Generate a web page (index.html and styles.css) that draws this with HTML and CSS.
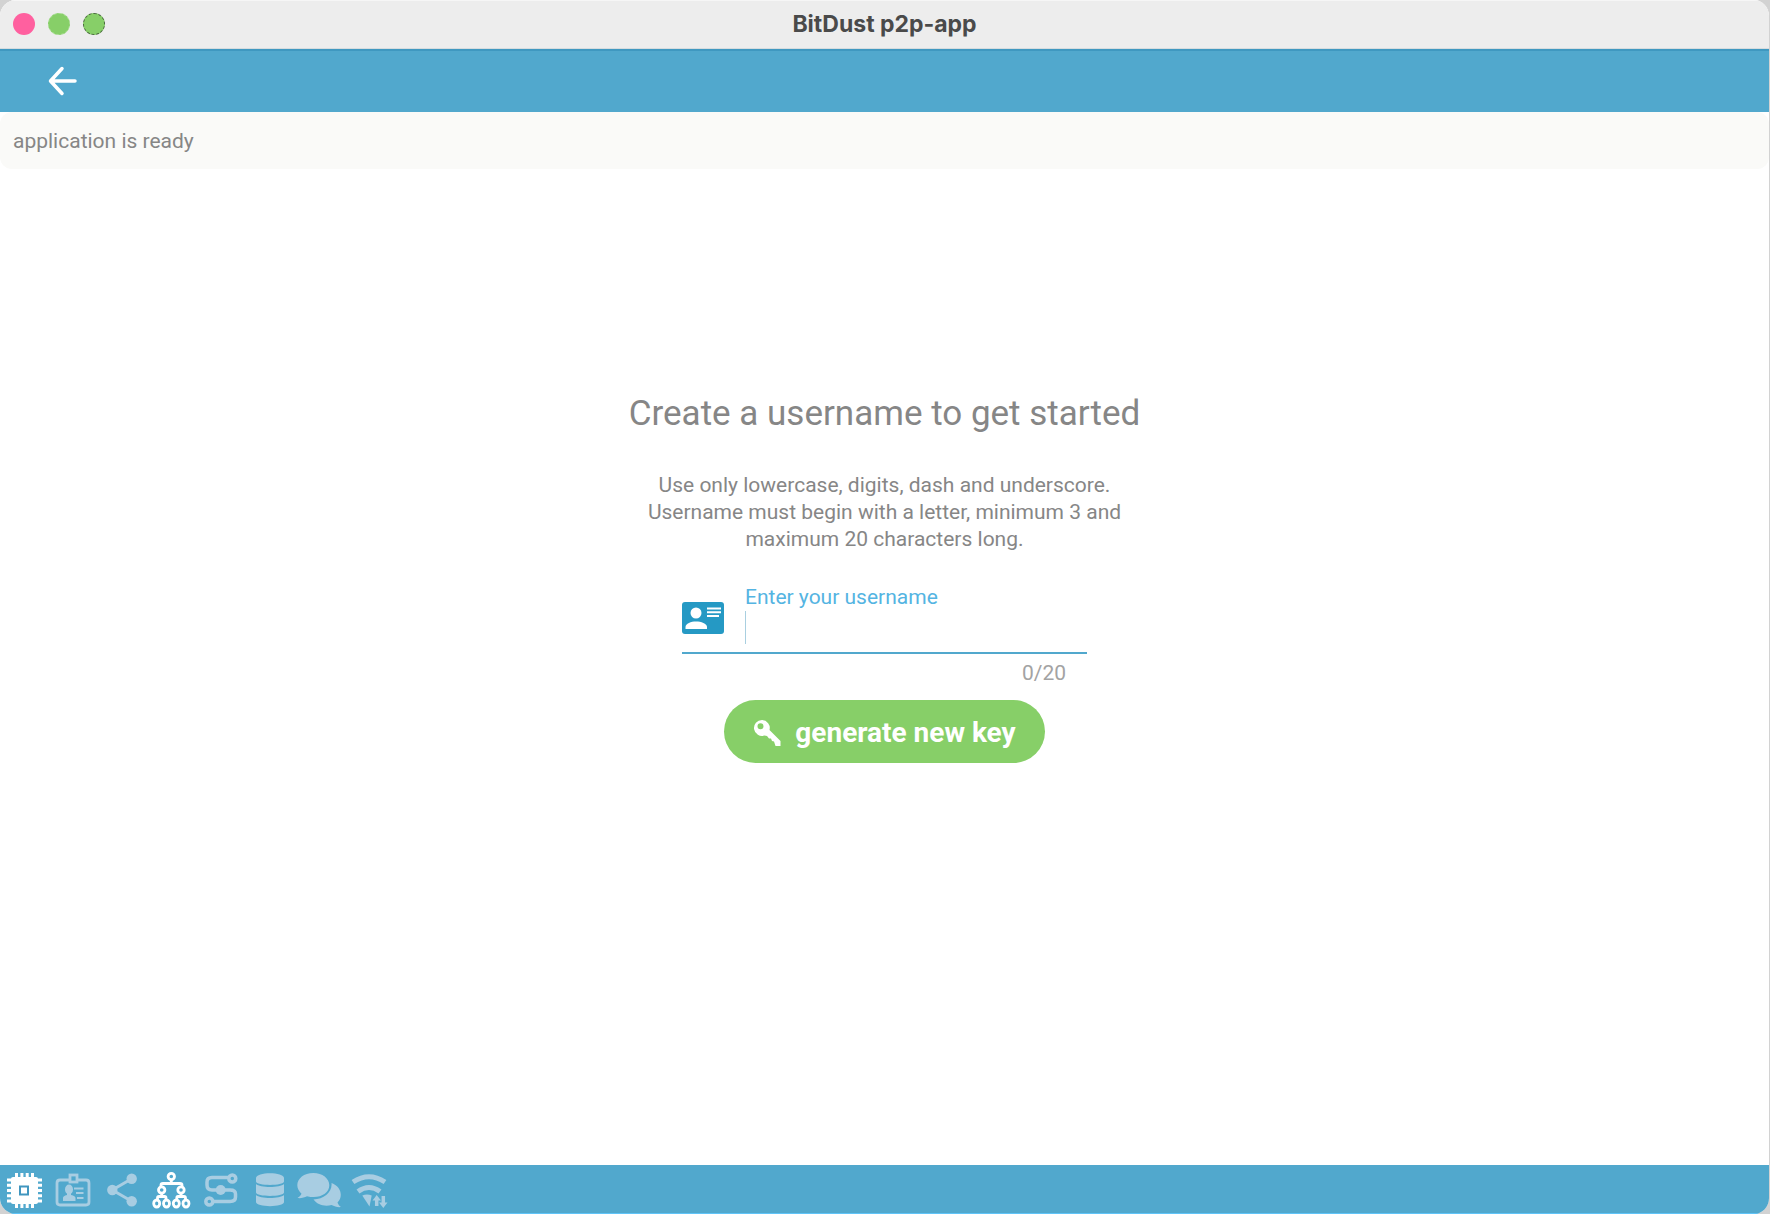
FILE: index.html
```html
<!DOCTYPE html>
<html lang="en">
<head>
<meta charset="utf-8">
<meta name="viewport" content="width=device-width, initial-scale=1">
<title>BitDust p2p-app</title>
<link rel="stylesheet" href="styles.css">
</head>
<body>
<div class="window">
  <header class="titlebar">
    <div class="lights">
      <button class="light light-close" type="button" aria-label="Close"></button>
      <button class="light light-min" type="button" aria-label="Minimize"></button>
      <button class="light light-max" type="button" aria-label="Maximize"></button>
    </div>
    <h1 class="title">BitDust p2p-app</h1>
  </header>

  <nav class="toolbar">
    <button class="back" type="button" aria-label="Back">
      <svg width="32" height="32" viewBox="0 0 32 32" fill="none" stroke="#fff" stroke-width="3.500" stroke-linecap="round" stroke-linejoin="round"><path d="M28 16H4M15 3.500L3.500 16L15 28.500"/></svg>
    </button>
  </nav>

  <p class="status">application is ready</p>

  <main class="content">
    <h2 class="heading">Create a username to get started</h2>
    <p class="hint">Use only lowercase, digits, dash and underscore. Username must begin with a letter, minimum 3 and maximum 20 characters long.</p>
    <form class="form">
      <div class="field">
        <svg class="field-icon" width="42" height="32" viewBox="0 0 42 32">
          <rect width="42" height="32" rx="3" fill="#2599c4"/>
          <circle cx="14" cy="11" r="5.500" fill="#fff"/>
          <path d="M3.500 27V25C3.500 21.500 9 19.500 14 19.500S25 21.500 25 25V27Z" fill="#fff"/>
          <path d="M25 6.500H39M25 10.200H39M25 14H37" stroke="#fff" stroke-width="2"/>
        </svg>
        <div class="field-text">
          <label class="label" for="username">Enter your username</label>
          <input class="input" id="username" type="text" maxlength="20" autocomplete="off">
        </div>
      </div>
      <p class="counter">0/20</p>
      <button class="generate" type="button">
        <svg width="28" height="28" viewBox="0 0 28 28"><path fill="#fff" fill-rule="evenodd" d="M9 1A8 8 0 1 0 11.500 16.600L14 17L16 19.500L18 19.500L19 22L21 22.500L22.500 27H27.500V22L16.500 11A8 8 0 0 0 9 1ZM7.500 4.300A3 3 0 1 1 7.500 10.300A3 3 0 1 1 7.500 4.300Z"/></svg>
        generate new key
      </button>
    </form>
  </main>

  <footer class="dock">
    <svg class="dock-icon active" viewBox="0 0 48 48">
      <rect x="11" y="12" width="27" height="27" rx="2" fill="currentColor"/>
      <path d="M16.500 8V43M21.900 8V43M27.200 8V43M32.500 8V43M7 15H42M7 20.200H42M7 25.500H42M7 30.700H42M7 36H42" stroke="currentColor" stroke-width="3"/>
      <rect x="20" y="21.500" width="8" height="8" fill="#fff" stroke="#4196bf" stroke-width="2"/>
    </svg>
    <svg class="dock-icon" viewBox="0 0 48 48" fill="none" stroke="currentColor" stroke-width="2.800">
      <path d="M20 15H11Q8 15 8 18V37Q8 40 11 40H37Q40 40 40 37V18Q40 15 37 15H29"/>
      <rect x="21" y="10" width="7" height="7"/>
      <path d="M25 23.500H34.500M27 28H34.500M28 33H34.500" stroke-width="2.200"/>
      <ellipse cx="20" cy="24.500" rx="4" ry="5" fill="currentColor" stroke="none"/>
      <path d="M14 36V33Q14 31 18 30V27H22V30Q26.500 31 26.500 33V36Z" fill="currentColor" stroke="none"/>
    </svg>
    <svg class="dock-icon" viewBox="0 0 48 48" fill="currentColor" stroke="currentColor">
      <path d="M33.700 13.700L14.300 25L33.700 36.300" fill="none" stroke-width="3"/>
      <g stroke="none"><circle cx="14.300" cy="25" r="5.200"/><circle cx="33.700" cy="13.700" r="5.200"/><circle cx="33.700" cy="36.300" r="5.200"/></g>
    </svg>
    <svg class="dock-icon active" viewBox="0 0 48 48" fill="none" stroke="currentColor" stroke-width="2.800">
      <circle cx="24.300" cy="11.500" r="3.200"/>
      <circle cx="14.700" cy="25" r="3.200"/><circle cx="34" cy="25" r="3.200"/>
      <ellipse cx="9.700" cy="38.500" rx="3" ry="3.500"/><ellipse cx="19.500" cy="38.500" rx="3" ry="3.500"/>
      <ellipse cx="29.300" cy="38.500" rx="3" ry="3.500"/><ellipse cx="39" cy="38.500" rx="3" ry="3.500"/>
      <path d="M24.300 15V18.500M14 22V20Q14 18.500 16 18.500H33Q35 18.500 35 20V22M14.700 28V31M10.500 35V33Q10.500 31.500 12 31.500H17.500Q19 31.500 19 33V35M34 28V31M29.800 35V33Q29.800 31.500 31 31.500H37Q38.500 31.500 38.500 33V35"/>
    </svg>
    <svg class="dock-icon" viewBox="0 0 48 48" fill="none" stroke="currentColor" stroke-width="3.500">
      <circle cx="36.300" cy="13.500" r="3.500"/><circle cx="13.300" cy="36.500" r="3.500"/>
      <circle cx="24.700" cy="25" r="5" fill="currentColor" stroke="none"/>
      <path d="M32.500 12.500H16Q11 12.500 11 17V20Q11 25 16 25H34Q39.500 25 39.500 29V32Q39.500 36.500 34 36.500H17"/>
    </svg>
    <svg class="dock-icon" viewBox="0 0 48 48" fill="currentColor">
      <path d="M11 13C11 6.500 39 6.500 39 13V16.500C39 21 11 21 11 16.500Z"/>
      <path d="M11 19C15 23 35 23 39 19V27.500C39 32 11 32 11 27.500Z"/>
      <path d="M11 30C15 34 35 34 39 30V37C39 42.500 11 42.500 11 37Z"/>
    </svg>
    <svg class="dock-icon" viewBox="0 0 48 48" fill="currentColor">
      <path d="M19.300 8C10 8 3.300 13.500 3.300 20.300C3.300 23.500 5 26.500 7.500 28.700C6.500 31 4.500 32 3.500 33C7 33.500 10.500 32.500 13 31.200C25 34.500 35.300 28.500 35.300 20.300C35.300 13.500 28.500 8 19.300 8Z"/>
      <path d="M37.500 18C38.500 27 30 34 19.500 34.500C23 39.500 30.500 42 37.500 40C40.500 41.500 44 42.500 47 42C45.500 41 44.300 39.500 43.500 37.500C49 32 48 22 37.500 18Z"/>
    </svg>
    <svg class="dock-icon" viewBox="0 0 48 48" fill="none" stroke="currentColor">
      <path d="M10 17Q26 6.500 42 17" stroke-width="5"/>
      <path d="M15 26.500Q26 18.500 37 26.500" stroke-width="5"/>
      <path d="M19.300 30.500Q24 28.500 28.700 30.500L26.500 41.500Z" fill="currentColor" stroke="none"/>
      <path d="M33.700 41V33M40.300 31V39" stroke-width="3.500"/>
      <path d="M29.500 35.500L33.700 30L38 35.500ZM36 37.500L40.300 43L44.500 37.500Z" fill="currentColor" stroke="none"/>
    </svg>
  </footer>
</div>
</body>
</html>
```
FILE: styles.css
```css
* { box-sizing: border-box; }

body {
  margin: 0;
  background: #d2d2d2;
  color: #868686;
  font-family: Roboto, "Liberation Sans", sans-serif;
}

h1, h2, p { margin: 0; font-weight: 400; }

button { padding: 0; border: 0; font: inherit; cursor: pointer; }

svg { display: block; flex: none; }

.window {
  display: flex;
  flex-direction: column;
  min-height: 100vh;
  overflow: hidden;
  border-right: 1px solid #d2d2d2;
  border-radius: 16px;
  background: #fff;
}

.titlebar {
  display: grid;
  grid-template-columns: 1fr auto 1fr;
  align-items: center;
  height: 49px;
  padding: 0 13px 2px;
  border-top: 1px solid #f6f6f6;
  border-bottom: 1px solid #d5dcdf;
  background: #ededed;
}

.lights { display: flex; gap: 13px; }

.light { width: 22px; height: 22px; border-radius: 50%; background: #87cf68; }
.light-close { background: #ff609f; }
.light-min { border: 1px dashed #a3dc8b; }
.light-max { border: 1px dashed #47683a; }

.title {
  color: #4a4a4a;
  font: 700 23px/28px Inter, sans-serif;
}

.toolbar {
  display: flex;
  align-items: center;
  height: 63px;
  padding: 0 47px 2px;
  border-top: 2px solid #3f98c0;
  background: #51a8cd;
}

.back { background: none; }

.status {
  padding: 16px 13px 14px;
  border-radius: 12px;
  background: #fafaf8;
  font-size: 21px;
  line-height: 27px;
}

.content {
  display: flex;
  flex: 1;
  flex-direction: column;
  align-items: center;
  padding: 223px 16px 32px;
}

.heading { font-size: 35px; line-height: 44px; text-align: center; }

.hint {
  max-width: 500px;
  margin-top: 36px;
  font-size: 21px;
  line-height: 27px;
  text-align: center;
}

.form {
  display: flex;
  flex-direction: column;
  align-items: center;
  width: 100%;
  max-width: 405px;
  margin-top: 31px;
}

.field {
  display: flex;
  align-items: flex-end;
  gap: 21px;
  width: 100%;
  padding-bottom: 8px;
  border-bottom: 2px solid #51a8cd;
}

.field-icon { margin-bottom: 10px; }

.field-text { display: flex; flex: 1; flex-direction: column; }

.label { color: #54b4e2; font-size: 21px; line-height: 27px; }

.input {
  width: 100%;
  height: 33px;
  padding: 0 4px;
  border: 0;
  border-left: 1px solid #a9cfe0;
  outline: 0;
  background: none;
  color: #555;
  font: inherit;
  font-size: 21px;
}

.counter {
  align-self: flex-end;
  margin: 6px 21px 13px;
  color: #a3a3a3;
  font-size: 21px;
  line-height: 27px;
}

.generate {
  display: flex;
  align-items: center;
  gap: 14px;
  height: 63px;
  padding: 2px 29px 0;
  border-radius: 32px;
  background: #87cf68;
  color: #fff;
  font-size: 28px;
  font-weight: 700;
}

.dock {
  display: flex;
  gap: 1px;
  height: 49px;
  border-bottom: 1px solid #5fc4f8;
  background: #51a8cd;
}

.dock-icon { width: 48px; height: 48px; color: #a8cde2; }
.dock-icon.active { color: #fff; }
```
